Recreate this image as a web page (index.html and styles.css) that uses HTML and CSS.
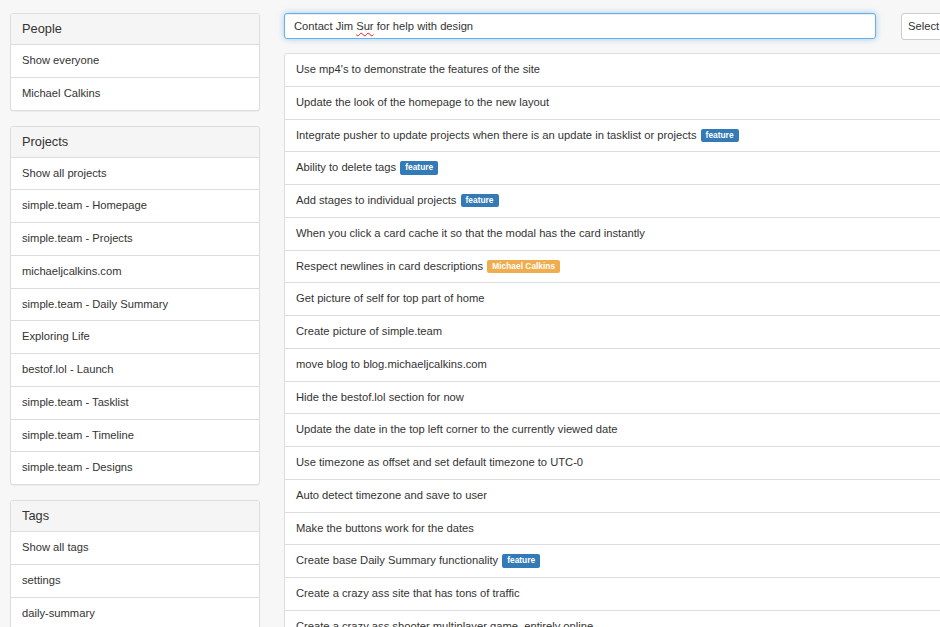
FILE: index.html
```html
<!DOCTYPE html>
<html>
<head>
<meta charset="utf-8">
<link rel="stylesheet" href="styles.css">
</head>
<body>
<div class="page">
  <aside class="sidebar">
    <div class="panel">
      <div class="panel-heading">People</div>
      <ul class="list">
        <li>Show everyone</li>
        <li>Michael Calkins</li>
      </ul>
    </div>
    <div class="panel">
      <div class="panel-heading">Projects</div>
      <ul class="list">
        <li>Show all projects</li>
        <li>simple.team - Homepage</li>
        <li>simple.team - Projects</li>
        <li>michaeljcalkins.com</li>
        <li>simple.team - Daily Summary</li>
        <li>Exploring Life</li>
        <li>bestof.lol - Launch</li>
        <li>simple.team - Tasklist</li>
        <li>simple.team - Timeline</li>
        <li>simple.team - Designs</li>
      </ul>
    </div>
    <div class="panel">
      <div class="panel-heading">Tags</div>
      <ul class="list">
        <li>Show all tags</li>
        <li>settings</li>
        <li>daily-summary</li>
        <li>design</li>
      </ul>
    </div>
  </aside>
  <main class="main">
    <div class="toolbar">
      <div class="input">Contact Jim <span class="misspelled">Sur</span> for help with design</div>
      <div class="select">Select a project</div>
    </div>
    <ul class="tasks">
      <li>Use mp4's to demonstrate the features of the site</li>
      <li>Update the look of the homepage to the new layout</li>
      <li>Integrate pusher to update projects when there is an update in tasklist or projects <span class="label label-primary">feature</span></li>
      <li>Ability to delete tags <span class="label label-primary">feature</span></li>
      <li>Add stages to individual projects <span class="label label-primary">feature</span></li>
      <li>When you click a card cache it so that the modal has the card instantly</li>
      <li>Respect newlines in card descriptions <span class="label label-warning">Michael Calkins</span></li>
      <li>Get picture of self for top part of home</li>
      <li>Create picture of simple.team</li>
      <li>move blog to blog.michaeljcalkins.com</li>
      <li>Hide the bestof.lol section for now</li>
      <li>Update the date in the top left corner to the currently viewed date</li>
      <li>Use timezone as offset and set default timezone to UTC-0</li>
      <li>Auto detect timezone and save to user</li>
      <li>Make the buttons work for the dates</li>
      <li>Create base Daily Summary functionality <span class="label label-primary">feature</span></li>
      <li>Create a crazy ass site that has tons of traffic</li>
      <li>Create a crazy ass shooter multiplayer game, entirely online</li>
    </ul>
  </main>
</div>
</body>
</html>
```

FILE: styles.css
```css
html, body {
  margin: 0;
  padding: 0;
  background: #f7f7f7;
  overflow: hidden;
}
body {
  font-family: "Liberation Sans", Arial, sans-serif;
  font-size: 11.2px;
  color: #333;
}
.page {
  display: flex;
  align-items: flex-start;
  gap: 24px;
  padding: 13px 0 0 10px;
  width: 1200px;
}
.sidebar {
  width: 250px;
  flex: none;
}
.panel {
  background: #fff;
  border: 1px solid #ddd;
  border-radius: 3px;
  box-shadow: 0 1px 1px rgba(0,0,0,.05);
  margin-bottom: 15px;
  overflow: hidden;
}
.panel-heading {
  background: #f5f5f5;
  border-bottom: 1px solid #ddd;
  padding: 8px 11px;
  font-size: 12.8px;
  line-height: 14px;
  color: #333;
}
.list {
  list-style: none;
  margin: 0;
  padding: 0;
}
.list li {
  padding: 8px 11px;
  line-height: 15.75px;
  border-top: 1px solid #ddd;
}
.list li:first-child {
  border-top: 0;
}
.main {
  flex: none;
  width: 900px;
}
.toolbar {
  display: flex;
  gap: 25px;
  margin-bottom: 13px;
}
.input {
  width: 592px;
  height: 26px;
  box-sizing: border-box;
  border: 1px solid #66afe9;
  border-radius: 3px;
  background: #fff;
  padding: 0 9px;
  line-height: 24px;
  box-shadow: inset 0 1px 1px rgba(0,0,0,.075), 0 0 6px rgba(102,175,233,.6);
}
.misspelled {
  text-decoration: underline wavy #e02020;
  text-decoration-thickness: 1px;
  text-underline-offset: 2px;
}
.select {
  width: 200px;
  height: 27px;
  box-sizing: border-box;
  border: 1px solid #ccc;
  border-radius: 3px;
  background: #fff;
  padding: 0 6px;
  line-height: 25px;
}
.tasks {
  list-style: none;
  margin: 0;
  padding: 0;
  background: #fff;
  border: 1px solid #ddd;
  border-radius: 3px;
}
.tasks li {
  padding: 8px 11px;
  line-height: 15.75px;
  border-top: 1px solid #ddd;
}
.tasks li:first-child {
  border-top: 0;
}
.label {
  display: inline-block;
  font-size: 8.4px;
  font-weight: bold;
  line-height: 1;
  color: #fff;
  padding: 2px 5px 3px;
  border-radius: 2px;
  vertical-align: 1px;
  margin-left: 1px;
}
.label-primary {
  background: #337ab7;
}
.label-warning {
  background: #f0ad4e;
}
```
